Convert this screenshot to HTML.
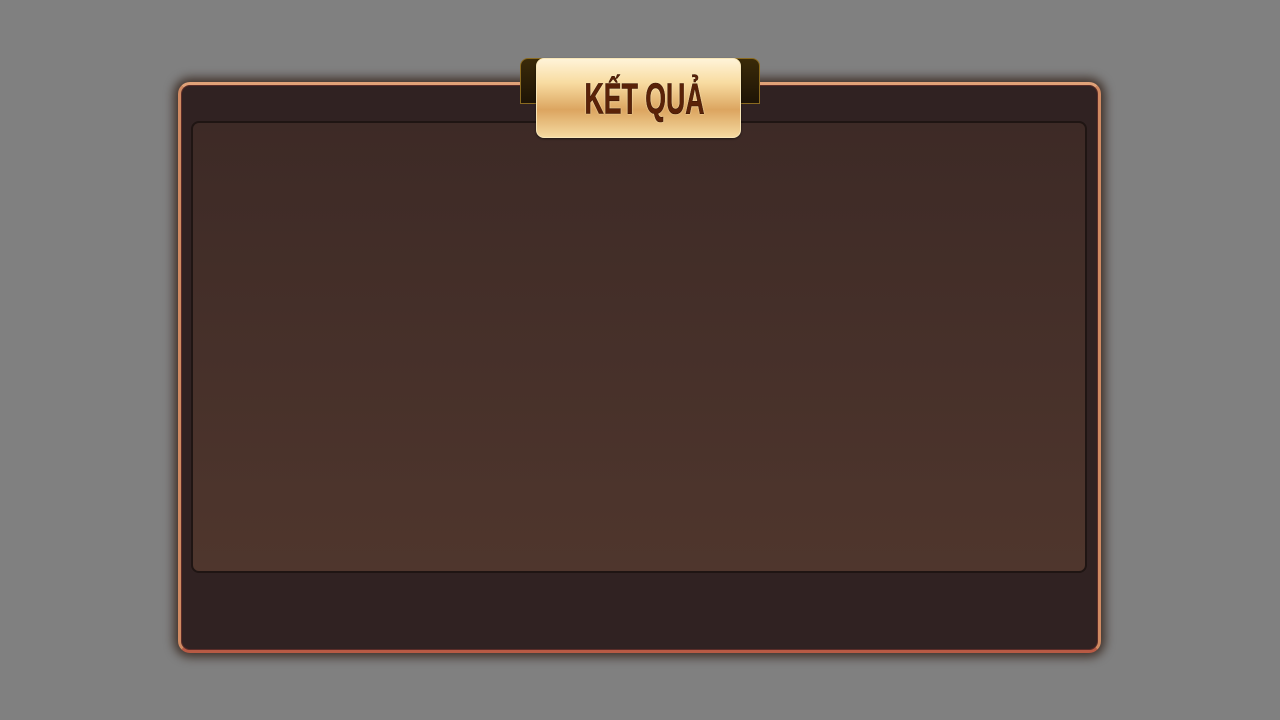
<!DOCTYPE html>
<html><head><meta charset="utf-8"><style>
html,body{margin:0;padding:0;}
body{width:1280px;height:720px;background:#808080;position:relative;overflow:hidden;font-family:"Liberation Sans",sans-serif;}
.frame{position:absolute;left:178px;top:82px;width:917px;height:565px;border:3px solid #d08a62;border-radius:12px;background:#302222;
box-shadow:0 0 10px 4px rgba(40,20,10,0.75), inset 0 0 0 1px #5a2c28;
border-top-color:#e0a278;border-bottom-color:#b85a44;}
.panel{position:absolute;left:191px;top:121px;width:892px;height:448px;border:2px solid #1f1513;border-radius:8px;
background:linear-gradient(#3d2a26,#4f362d);}
.tab{position:absolute;top:58px;width:30px;height:44px;background:linear-gradient(#3a2a08,#1e1406);border:1px solid #8a6a20;border-radius:8px 8px 0 0;}
.plate{position:absolute;left:536px;top:58px;width:205px;height:80px;border-radius:8px;
background:linear-gradient(#fff4d8 0%,#f8dca2 30%,#dca560 65%,#f4d9a0 100%);border:1px solid #f8e6b8;box-sizing:border-box;
box-shadow:0 1px 2px rgba(0,0,0,.5);}
.title{position:absolute;left:542px;top:74px;width:205px;text-align:center;font-family:"Liberation Sans Narrow","Liberation Sans",sans-serif;font-weight:bold;font-size:36px;
color:#5a2208;transform:scale(0.74,1.2);transform-origin:50% 0;
-webkit-text-stroke:0.5px #3a1404;text-shadow:0 0 2px #fff2c8,0 0 1px #fff2c8;}
</style></head><body>
<div class="frame"></div>
<div class="panel"></div>
<div class="tab" style="left:520px"></div>
<div class="tab" style="left:728px"></div>
<div class="plate"></div>
<div class="title">KẾT QUẢ</div>
</body></html>
